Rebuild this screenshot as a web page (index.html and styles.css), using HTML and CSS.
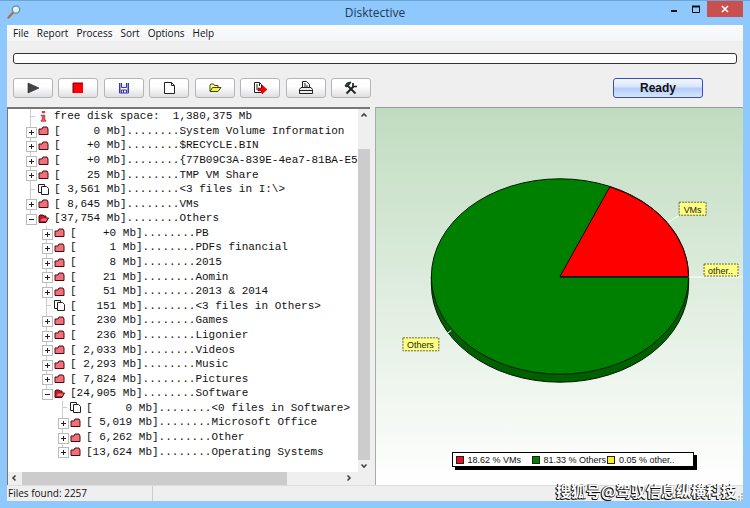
FILE: index.html
```html
<!DOCTYPE html>
<html lang="en">
<head>
    <meta charset="UTF-8">
    <meta name="viewport" content="width=device-width, initial-scale=1.0">
    <title>Disktective</title>
    <link rel="stylesheet" href="styles.css">
</head>
<body>

    <!-- Shared tree icons -->
    <svg class="sprites" aria-hidden="true">
        <symbol id="folder" viewBox="0 0 11 11">
            <path d="M1 4h3l1-2h4l1 2v5.500h-9z" fill="#f0717a" stroke="#4a0a10"/>
        </symbol>
        <symbol id="folder-open" viewBox="0 0 11 11">
            <path d="M1 9V3l1-1h3l1 1h2v2h2.500L8 9.500H1z" fill="#c81824" stroke="#4a0a10"/>
            <path d="M2.500 8l1.500-2.500h5.500L8 8z" fill="#f0717a"/>
        </symbol>
        <symbol id="files" viewBox="0 0 11 11">
            <path d="M3 8.500H.5v-8h6V2" fill="#fff" stroke="#222"/>
            <path d="M3.500 2.500h5l2 2v6h-7z" fill="#fff" stroke="#222"/>
        </symbol>
        <symbol id="info" viewBox="0 0 11 11">
            <path d="M4 0h3v2H4zM3 4h4v5h1v1.500H3V9h1V5H3z" fill="#e0565c" stroke="#a02028" stroke-width=".4"/>
        </symbol>
    </svg>

    <div class="window">
        <!-- Title bar -->
        <header class="titlebar">
            <svg class="app-icon" viewBox="0 0 14 14">
                <path d="M1.500 12.500l4.500-5" stroke="#a9744f" stroke-width="2.400" stroke-linecap="round"/>
                <circle cx="9" cy="4.500" r="3.700" fill="#d4f3fb" stroke="#6a8594" stroke-width="1.200"/>
                <path d="M7 4a2 2 0 0 1 2-1.500" stroke="#fff" fill="none"/>
            </svg>
            <h1>Disktective</h1>
            <div class="window-controls">
                <button type="button" aria-label="Minimize"><svg viewBox="0 0 10 10"><path d="M2 7h6" stroke="#111" stroke-width="2"/></svg></button>
                <button type="button" aria-label="Maximize"><svg viewBox="0 0 10 10"><path d="M1.500 2.500h7v6h-7z" fill="none" stroke="#111"/><path d="M1 2.500h8" stroke="#111" stroke-width="2"/></svg></button>
                <button type="button" class="close" aria-label="Close"><svg viewBox="0 0 10 10"><path d="M2 2l6 6M8 2l-6 6" stroke="#fff" stroke-width="1.600"/></svg></button>
            </div>
        </header>

        <div class="client">
            <!-- Menu -->
            <nav class="menu">
                <button type="button">File</button>
                <button type="button">Report</button>
                <button type="button">Process</button>
                <button type="button">Sort</button>
                <button type="button">Options</button>
                <button type="button">Help</button>
            </nav>

            <div class="progress" role="progressbar" aria-label="Scan progress"></div>

            <!-- Toolbar -->
            <div class="toolbar">
                <div class="tools">
                    <button type="button" aria-label="Start"><svg viewBox="0 0 14 14"><path d="M2 2l11 5-11 5z" fill="#444" stroke="#222" stroke-width=".6"/></svg></button>
                    <button type="button" aria-label="Stop"><svg viewBox="0 0 14 14"><path d="M2 2h10v10H2z" fill="#fb0007"/><path d="M2 12V2h10" fill="none" stroke="#700" stroke-width="1"/></svg></button>
                    <button type="button" aria-label="Save"><svg viewBox="0 0 14 14"><path d="M2.500 2v10h9V2M4.500 2v4.500h5V2M4.500 12V9h5v3M6.500 9v3" fill="none" stroke="#3a36a8"/><path d="M3 2v9M11 2v9" stroke="#3a36a8"/><path d="M5 3h4v3H5z" fill="#e8eaff"/></svg></button>
                    <button type="button" aria-label="New"><svg viewBox="0 0 14 14"><path d="M2.500 1.500h7l3 3v8h-10z" fill="#fff" stroke="#222"/><path d="M9.500 1.500v3h3" fill="none" stroke="#222"/></svg></button>
                    <button type="button" aria-label="Open"><svg viewBox="0 0 14 14"><path d="M2 10V4l1-1h2.500l1 1.500H10V6" fill="#ffff90" stroke="#44440a"/><path d="M2 10.500L4.500 6.500H13l-3 4z" fill="#f2f250" stroke="#44440a"/></svg></button>
                    <button type="button" aria-label="Export"><svg viewBox="0 0 14 14"><path d="M1.500 1.500h5l2 2v8h-7z" fill="#fff" stroke="#222"/><path d="M3 4h2M3 6h2M3 8h2M6.500 2v3" stroke="#222"/><path d="M5 7h4V4l5 4.500L9 13v-3H5z" fill="#f00" stroke="#800" stroke-width=".5"/></svg></button>
                    <button type="button" aria-label="Print"><svg viewBox="0 0 14 14"><path d="M3.500 7V.5h4l3 3V7" fill="#fff" stroke="#222"/><path d="M5 3h2M5 5h4" stroke="#222"/><path d="M2 6.500h10l1.500 2v4H.5v-4z" fill="#eee" stroke="#222"/><path d="M1 9.500h12" stroke="#222"/></svg></button>
                    <button type="button" aria-label="Settings"><svg viewBox="0 0 14 14"><path d="M4 5l7.500 7.500" stroke="#222" stroke-width="1.800"/><path d="M1 5l2-3 4-1-2 3-2 2z" fill="#165a3a" stroke="#122"/><path d="M2.500 12.500l7-7" stroke="#222" stroke-width="2"/><path d="M9 2v3.500h4" fill="none" stroke="#222" stroke-width="1.700"/></svg></button>
                </div>
                <button type="button" class="ready">Ready</button>
            </div>

            <main class="panes">
                <!-- Folder tree -->
                <section class="tree-pane">
                    <ul class="tree">
                        <li><i class="guide"></i><svg><use href="#info"/></svg><span>free disk space:  1,380,375 Mb</span></li>
                        <li><i class="guide plus"></i><svg><use href="#folder"/></svg><span>[     0 Mb]........System Volume Information</span></li>
                        <li><i class="guide plus"></i><svg><use href="#folder"/></svg><span>[    +0 Mb]........$RECYCLE.BIN</span></li>
                        <li><i class="guide plus"></i><svg><use href="#folder"/></svg><span>[    +0 Mb]........{77B09C3A-839E-4ea7-81BA-E5</span></li>
                        <li><i class="guide plus"></i><svg><use href="#folder"/></svg><span>[    25 Mb]........TMP VM Share</span></li>
                        <li><i class="guide"></i><svg><use href="#files"/></svg><span>[ 3,561 Mb]........&lt;3 files in I:\&gt;</span></li>
                        <li><i class="guide plus"></i><svg><use href="#folder"/></svg><span>[ 8,645 Mb]........VMs</span></li>
                        <li><i class="guide minus last"></i><svg><use href="#folder-open"/></svg><span>[37,754 Mb]........Others</span></li>
                        <li class="level-1"><i class="guide plus"></i><svg><use href="#folder"/></svg><span>[    +0 Mb]........PB</span></li>
                        <li class="level-1"><i class="guide plus"></i><svg><use href="#folder"/></svg><span>[     1 Mb]........PDFs financial</span></li>
                        <li class="level-1"><i class="guide plus"></i><svg><use href="#folder"/></svg><span>[     8 Mb]........2015</span></li>
                        <li class="level-1"><i class="guide plus"></i><svg><use href="#folder"/></svg><span>[    21 Mb]........Aomin</span></li>
                        <li class="level-1"><i class="guide plus"></i><svg><use href="#folder"/></svg><span>[    51 Mb]........2013 &amp; 2014</span></li>
                        <li class="level-1"><i class="guide"></i><svg><use href="#files"/></svg><span>[   151 Mb]........&lt;3 files in Others&gt;</span></li>
                        <li class="level-1"><i class="guide plus"></i><svg><use href="#folder"/></svg><span>[   230 Mb]........Games</span></li>
                        <li class="level-1"><i class="guide plus"></i><svg><use href="#folder"/></svg><span>[   236 Mb]........Ligonier</span></li>
                        <li class="level-1"><i class="guide plus"></i><svg><use href="#folder"/></svg><span>[ 2,033 Mb]........Videos</span></li>
                        <li class="level-1"><i class="guide plus"></i><svg><use href="#folder"/></svg><span>[ 2,293 Mb]........Music</span></li>
                        <li class="level-1"><i class="guide plus"></i><svg><use href="#folder"/></svg><span>[ 7,824 Mb]........Pictures</span></li>
                        <li class="level-1"><i class="guide minus last"></i><svg><use href="#folder-open"/></svg><span>[24,905 Mb]........Software</span></li>
                        <li class="level-2"><i class="guide"></i><svg><use href="#files"/></svg><span>[     0 Mb]........&lt;0 files in Software&gt;</span></li>
                        <li class="level-2"><i class="guide plus"></i><svg><use href="#folder"/></svg><span>[ 5,019 Mb]........Microsoft Office</span></li>
                        <li class="level-2"><i class="guide plus"></i><svg><use href="#folder"/></svg><span>[ 6,262 Mb]........Other</span></li>
                        <li class="level-2"><i class="guide plus last"></i><svg><use href="#folder"/></svg><span>[13,624 Mb]........Operating Systems</span></li>
                    </ul>
                    <div class="vscroll">
                        <svg viewBox="0 0 12 12"><path d="M3.500 7.500L6 5l2.500 2.500" fill="none" stroke="#444" stroke-width="1.600"/></svg>
                        <div class="thumb"></div>
                        <svg viewBox="0 0 12 12"><path d="M3.500 4.500L6 7l2.500-2.500" fill="none" stroke="#444" stroke-width="1.600"/></svg>
                    </div>
                    <div class="hscroll">
                        <svg viewBox="0 0 12 12"><path d="M7.500 3.500L5 6l2.500 2.500" fill="none" stroke="#444" stroke-width="1.600"/></svg>
                        <div class="thumb"></div>
                        <svg viewBox="0 0 12 12"><path d="M4.500 3.500L7 6l-2.500 2.500" fill="none" stroke="#444" stroke-width="1.600"/></svg>
                    </div>
                </section>

                <!-- Pie chart -->
                <section class="chart-pane">
                    <svg class="pie" viewBox="0 0 367 345">
                        <path d="M55 169v8a129 98 0 0 0 258 0v-8z" fill="#006000" stroke="#001800"/>
                        <ellipse cx="184" cy="169" rx="129" ry="98" fill="#008000" stroke="#001800"/>
                        <path d="M184 169L234 79A129 98 0 0 1 313 169z" fill="#f00" stroke="#200"/>
                        <path d="M184 169.500h129" stroke="#111" stroke-width="1.500"/>
                        <path d="M292 115l11-7M313 169.500h54M71 226l4-3" stroke="#fff"/>
                        <g class="tag">
                            <rect x="303.500" y="94.500" width="27" height="13"/>
                            <text x="317" y="105">VMs</text>
                            <rect x="328.500" y="156.500" width="34" height="12"/>
                            <text x="345" y="166">other..</text>
                            <rect x="26.500" y="230.500" width="36" height="13"/>
                            <text x="44" y="241">Others</text>
                        </g>
                    </svg>
                    <ul class="legend">
                        <li><i class="swatch red"></i>18.62 % VMs</li>
                        <li><i class="swatch green"></i>81.33 % Others</li>
                        <li><i class="swatch yellow"></i>0.05 % other..</li>
                    </ul>
                </section>
            </main>

            <footer class="statusbar">
                <span class="count">Files found: 2257</span>
                <svg class="grip" viewBox="0 0 8 8"><path d="M6 0h2v2H6zM3 3h2v2H3zM6 3h2v2H6zM0 6h2v2H0zM3 6h2v2H3zM6 6h2v2H6z" fill="#bbb"/></svg>
            </footer>
        </div>

        <div class="watermark" lang="zh">搜狐号@驾驭信息纵横科技</div>
    </div>

</body>
</html>
```
FILE: styles.css
```css
* {
    box-sizing: border-box;
}

body {
    margin: 0;
    font-family: "Open Sans", "Noto Sans", sans-serif;
    font-size: 10px;
    color: #111;
}

button {
    font: inherit;
    color: inherit;
    padding: 0;
    border: none;
    background: none;
}

ul {
    margin: 0;
    padding: 0;
    list-style: none;
}

.sprites {
    display: none;
}

/* Window frame */
.window {
    position: relative;
    display: flex;
    flex-direction: column;
    height: 100vh;
    padding: 0 7px 7px;
    background: #8fc8fc;
    border-top: 1px solid #6aa5d8;
    overflow: hidden;
}

.titlebar {
    display: grid;
    grid-template-columns: 1fr auto 1fr;
    height: 24px;
}

.app-icon {
    width: 14px;
    height: 14px;
    margin-top: 4px;
}

.titlebar h1 {
    margin: 0;
    font-size: 12px;
    font-weight: normal;
    line-height: 24px;
    color: #1d3a55;
}

.window-controls {
    display: flex;
    justify-content: flex-end;
    height: 16px;
}

.window-controls button {
    width: 22px;
    height: 16px;
}

.window-controls .close {
    width: 36px;
    background: #c9504f;
}

.window-controls svg {
    display: block;
    width: 10px;
    height: 10px;
    margin: 0 auto;
}

.client {
    display: flex;
    flex-direction: column;
    flex: 1;
    min-height: 0;
    background: #f0eff0;
}

/* Menu */
.menu {
    display: flex;
    gap: 8px;
    height: 16px;
    padding-left: 6px;
    background: linear-gradient(#fbfbfc, #f4f5f7);
    line-height: 16px;
}

.progress {
    height: 11px;
    margin: 12px 6px 0;
    border: 1px solid #333;
    border-radius: 3px;
    background: #fff;
}

/* Toolbar */
.toolbar {
    display: flex;
    justify-content: space-between;
    padding: 14px 40px 9px 6px;
}

.tools {
    display: flex;
    justify-content: space-between;
    width: 358px;
}

.tools button {
    width: 40px;
    height: 20px;
    border: 1px solid #b5b5b8;
    border-radius: 3px;
    background: linear-gradient(#fff 40%, #dfdfe2);
}

.tools svg {
    display: block;
    width: 14px;
    height: 14px;
    margin: 0 auto;
}

.ready {
    width: 90px;
    height: 20px;
    border: 1px solid #3a4cc0;
    border-radius: 3px;
    background: linear-gradient(#f4f8ff, #d6e5fc 45%, #b4cdf6 50%, #d4e6ff);
    font-family: "Liberation Sans", Arial, sans-serif;
    font-size: 12px;
    font-weight: bold;
    line-height: 18px;
}

/* Panes */
.panes {
    display: grid;
    grid-template-columns: 363px 1fr;
    gap: 5px;
    flex: 1;
    min-height: 0;
}

.tree-pane {
    display: grid;
    grid-template-columns: 1fr 12px;
    grid-template-rows: 1fr 13px;
    min-height: 0;
    border-top: 2px solid #777;
    border-left: 1px solid #777;
    background: #fff;
}

.tree {
    display: flex;
    flex-direction: column;
    min-height: 0;
    min-width: 0;
    padding-bottom: 13px;
    overflow: hidden;
    font-family: "Liberation Mono", "Courier New", monospace;
    font-size: 11px;
    line-height: 14px;
}

.tree li {
    display: flex;
    align-items: center;
    flex: 1;
    min-height: 0;
    padding-left: 18px;
    white-space: pre;
}

.tree .level-1 {
    padding-left: 34px;
}

.tree .level-2 {
    padding-left: 50px;
}

.tree svg {
    flex: none;
    width: 11px;
    height: 11px;
    margin: 0 5px 0 3px;
}

/* Expander column with its connector lines */
.guide {
    position: relative;
    flex: none;
    align-self: stretch;
    width: 9px;
    background: linear-gradient(#ccc, #ccc) 4px 0 / 1px 100% no-repeat,
                linear-gradient(#ccc, #ccc) 4px 50% / 5px 1px no-repeat;
}

.guide.last {
    background-size: 1px 50%, 5px 1px;
}

.plus::before,
.minus::before {
    content: "";
    position: absolute;
    top: 3px;
    left: 0;
    width: 9px;
    height: 9px;
    border: 1px solid #bbb;
    background: linear-gradient(#222, #222) center / 5px 1px no-repeat,
                linear-gradient(#222, #222) center / 1px 5px no-repeat,
                #fff;
}

.minus::before {
    background: linear-gradient(#222, #222) center / 5px 1px no-repeat, #fff;
}

/* Scroll bars */
.vscroll,
.hscroll {
    display: flex;
    background: #f0eff0;
}

.vscroll {
    flex-direction: column;
}

.vscroll svg,
.hscroll svg {
    flex: none;
    width: 12px;
    height: 12px;
}

.thumb {
    flex: 1;
    background: #cdcccd;
}

.vscroll .thumb {
    margin-top: 28px;
}

.hscroll {
    grid-column: 1 / 3;
    padding-right: 15px;
}

.hscroll .thumb {
    margin: 0 56px 0 2px;
}

/* Chart */
.chart-pane {
    display: flex;
    flex-direction: column;
    align-items: center;
    min-height: 0;
    padding-bottom: 18px;
    border-top: 1px solid #999;
    border-left: 1px solid #aaa;
    background: linear-gradient(#c0dcc0, #fff);
}

.pie {
    flex: 1;
    width: 100%;
    min-height: 0;
    font-family: "Liberation Sans", Arial, sans-serif;
    font-size: 9px;
}

.tag rect {
    fill: #ffff80;
    stroke: #66663a;
    stroke-dasharray: 2 1;
}

.tag text {
    text-anchor: middle;
    fill: #222;
}

.legend {
    display: flex;
    align-items: center;
    gap: 1px;
    width: 242px;
    height: 15px;
    margin-left: 26px;
    padding-left: 3px;
    border: 1px solid #000;
    background: #fff;
    box-shadow: 3px 3px 0 #000;
    font-family: "Liberation Sans", Arial, sans-serif;
    font-size: 9px;
}

.legend li {
    display: flex;
    align-items: center;
    gap: 4px;
}

.legend li:first-child {
    width: 75px;
}

.swatch {
    width: 8px;
    height: 8px;
    border: 1px solid #222;
}

.red {
    background: #e8101c;
}

.green {
    background: #008000;
}

.yellow {
    background: #ffee20;
}

/* Status bar */
.statusbar {
    display: flex;
    align-items: flex-end;
    justify-content: space-between;
    height: 16px;
    border-top: 1px solid #ddd;
}

.count {
    width: 146px;
    padding-left: 1px;
    border-right: 1px solid #ccc;
    line-height: 15px;
}

.grip {
    width: 8px;
    height: 8px;
}

.watermark {
    position: absolute;
    right: 14px;
    bottom: 6px;
    font-family: "Noto Sans CJK SC", sans-serif;
    font-size: 15px;
    font-weight: bold;
    line-height: 22px;
    color: #fff;
    text-shadow: -1px 0 #111, 0 1px #111, -1px 1px #111;
}
```
